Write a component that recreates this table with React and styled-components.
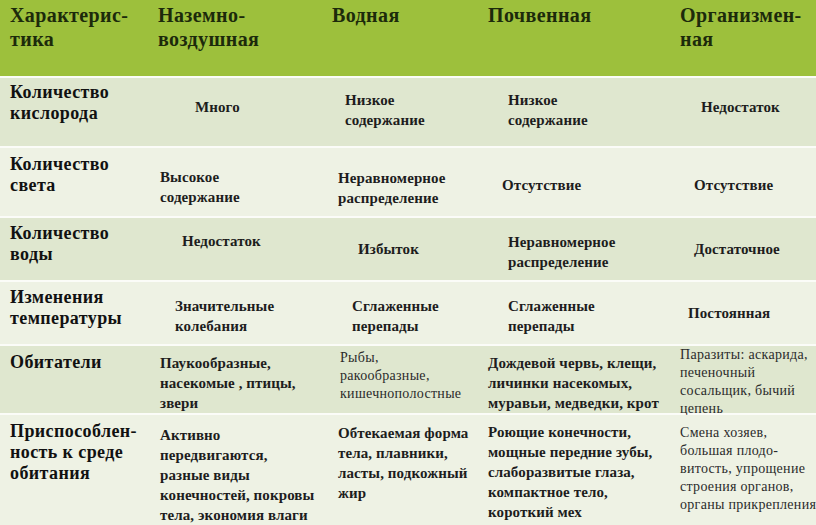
import React from "react";
import styled, { createGlobalStyle } from "styled-components";

const GlobalStyle = createGlobalStyle`
  html, body {
    margin: 0;
    padding: 0;
    background: #ffffff;
  }
`;

const COLS = "150px 178px 152px 193px 143px";

const Table = styled.div`
  width: 816px;
  height: 525px;
  display: flex;
  flex-direction: column;
  gap: 2px;
  background: #fbfcf8;
  overflow: hidden;
  font-family: "Liberation Serif", "DejaVu Serif", serif;
`;

const HeaderRow = styled.div`
  display: grid;
  grid-template-columns: ${COLS};
  height: 76px;
  background: #9dc03c;
`;

const HeadCell = styled.div`
  padding: 3px 0 0 ${(p) => p.$pl}px;
  font-size: 20px;
  font-weight: bold;
  line-height: 24px;
  letter-spacing: 0.4px;
  color: #1c2a0b;
  white-space: nowrap;
`;

const Row = styled.div`
  display: grid;
  grid-template-columns: ${COLS};
  height: ${(p) => p.$h}px;
  background: ${(p) => (p.$shade ? "#dfe7cf" : "#eef2e4")};
`;

const Label = styled.div`
  padding: ${(p) => p.$pt}px 0 0 10px;
  font-size: 18px;
  font-weight: bold;
  line-height: 21px;
  letter-spacing: 0.4px;
  color: #111;
  white-space: nowrap;
`;

const Cell = styled.div`
  padding: ${(p) => p.$pt}px 0 0 ${(p) => p.$pl}px;
  font-size: ${(p) => (p.$small ? "14px" : "15px")};
  font-weight: ${(p) => (p.$small ? "normal" : "bold")};
  line-height: ${(p) => (p.$small ? "18px" : "20px")};
  letter-spacing: ${(p) => (p.$small ? "0.3px" : "0.1px")};
  color: ${(p) => (p.$small ? "#2b2b2b" : "#1d1d1d")};
  white-space: nowrap;
`;

const headers = [
  { pl: 10, lines: ["Характерис-", "тика"] },
  { pl: 8, lines: ["Наземно-", "воздушная"] },
  { pl: 4, lines: ["Водная"] },
  { pl: 8, lines: ["Почвенная"] },
  { pl: 7, lines: ["Организмен-", "ная"] },
];

const rows = [
  {
    h: 68,
    shade: true,
    label: { pt: 4, lines: ["Количество", "кислорода"] },
    cells: [
      { pl: 45, pt: 19, lines: ["Много"] },
      { pl: 17, pt: 12, lines: ["Низкое", "содержание"] },
      { pl: 28, pt: 12, lines: ["Низкое", "содержание"] },
      { pl: 28, pt: 19, lines: ["Недостаток"] },
    ],
  },
  {
    h: 68,
    label: { pt: 6, lines: ["Количество", "света"] },
    cells: [
      { pl: 10, pt: 19, lines: ["Высокое", "содержание"] },
      { pl: 10, pt: 20, lines: ["Неравномерное", "распределение"] },
      { pl: 22, pt: 27, lines: ["Отсутствие"] },
      { pl: 21, pt: 27, lines: ["Отсутствие"] },
    ],
  },
  {
    h: 62,
    shade: true,
    label: { pt: 5, lines: ["Количество", "воды"] },
    cells: [
      { pl: 32, pt: 13, lines: ["Недостаток"] },
      { pl: 30, pt: 21, lines: ["Избыток"] },
      { pl: 28, pt: 14, lines: ["Неравномерное", "распределение"] },
      { pl: 21, pt: 21, lines: ["Достаточное"] },
    ],
  },
  {
    h: 62,
    label: { pt: 5, lines: ["Изменения", "температуры"] },
    cells: [
      { pl: 25, pt: 14, lines: ["Значительные", "колебания"] },
      { pl: 24, pt: 14, lines: ["Сглаженные", "перепады"] },
      { pl: 28, pt: 14, lines: ["Сглаженные", "перепады"] },
      { pl: 15, pt: 21, lines: ["Постоянная"] },
    ],
  },
  {
    h: 67,
    shade: true,
    label: { pt: 6, lines: ["Обитатели"] },
    cells: [
      { pl: 10, pt: 7, lines: ["Паукообразные,", "насекомые , птицы,", "звери"] },
      { pl: 12, pt: 3, small: true, lines: ["Рыбы,", "ракообразные,", "кишечнополостные"] },
      { pl: 8, pt: 7, lines: ["Дождевой червь, клещи,", "личинки насекомых,", "муравьи, медведки, крот"] },
      { pl: 7, pt: 0, small: true, lines: ["Паразиты: аскарида,", "печеночный", "сосальщик, бычий", "цепень"] },
    ],
  },
  {
    h: 110,
    label: { pt: 6, lines: ["Приспособлен-", "ность к среде", "обитания"] },
    cells: [
      { pl: 10, pt: 10, lines: ["Активно", "передвигаются,", "разные виды", "конечностей, покровы", "тела, экономия влаги"] },
      { pl: 10, pt: 8, lines: ["Обтекаемая форма", "тела, плавники,", "ласты, подкожный", "жир"] },
      { pl: 8, pt: 7, lines: ["Роющие конечности,", "мощные передние зубы,", "слаборазвитые глаза,", "компактное тело,", "короткий мех"] },
      { pl: 7, pt: 9, small: true, lines: ["Смена хозяев,", "большая плодо-", "витость, упрощение", "строения органов,", "органы прикрепления"] },
    ],
  },
];

const Lines = ({ lines }) =>
  lines.map((l, i) => (
    <React.Fragment key={i}>
      {i > 0 && <br />}
      {l}
    </React.Fragment>
  ));

export default function App() {
  return (
    <>
      <GlobalStyle />
      <Table>
        <HeaderRow>
          {headers.map((h, i) => (
            <HeadCell key={i} $pl={h.pl}>
              <Lines lines={h.lines} />
            </HeadCell>
          ))}
        </HeaderRow>
        {rows.map((r, i) => (
          <Row key={i} $h={r.h} $shade={r.shade}>
            <Label $pt={r.label.pt}>
              <Lines lines={r.label.lines} />
            </Label>
            {r.cells.map((c, j) => (
              <Cell key={j} $pl={c.pl} $pt={c.pt} $small={c.small}>
                <Lines lines={c.lines} />
              </Cell>
            ))}
          </Row>
        ))}
      </Table>
    </>
  );
}
